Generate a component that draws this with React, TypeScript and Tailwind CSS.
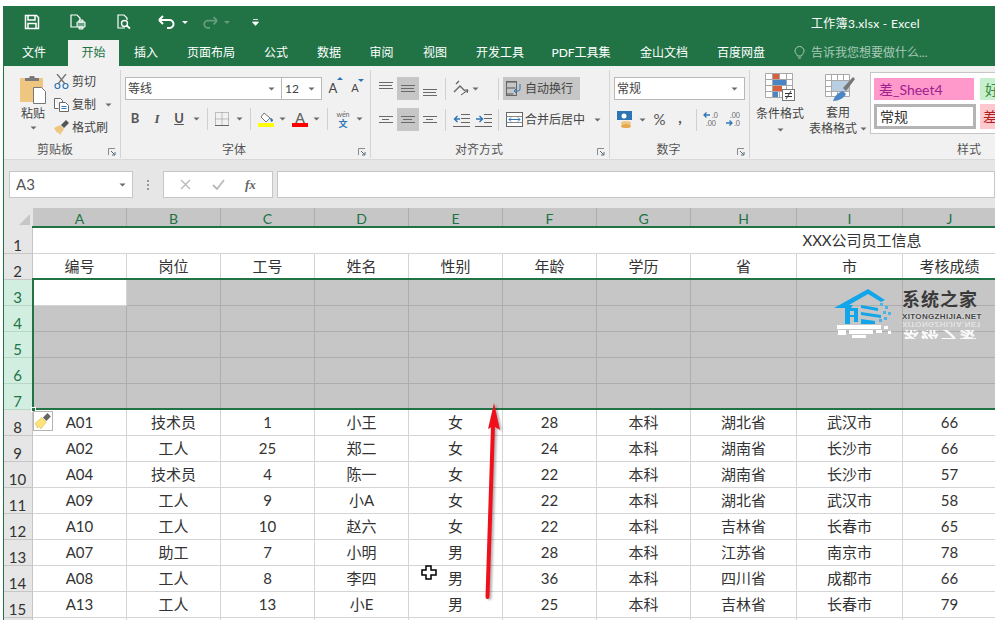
import { ReactNode } from "react";

const columns = [
  { label: "A", w: "w-[94px]", title: "编号" },
  { label: "B", w: "w-[94px]", title: "岗位" },
  { label: "C", w: "w-[94px]", title: "工号" },
  { label: "D", w: "w-[94px]", title: "姓名" },
  { label: "E", w: "w-[94px]", title: "性别" },
  { label: "F", w: "w-[94px]", title: "年龄" },
  { label: "G", w: "w-[94px]", title: "学历" },
  { label: "H", w: "w-[106px]", title: "省" },
  { label: "I", w: "w-[106px]", title: "市" },
  { label: "J", w: "w-[94px]", title: "考核成绩" },
];

const people = [
  ["A01", "技术员", "1", "小王", "女", "28", "本科", "湖北省", "武汉市", "66"],
  ["A02", "工人", "25", "郑二", "女", "24", "本科", "湖南省", "长沙市", "66"],
  ["A04", "技术员", "4", "陈一", "女", "22", "本科", "湖南省", "长沙市", "57"],
  ["A09", "工人", "9", "小A", "女", "22", "本科", "湖北省", "武汉市", "58"],
  ["A10", "工人", "10", "赵六", "女", "22", "本科", "吉林省", "长春市", "65"],
  ["A07", "助工", "7", "小明", "男", "28", "本科", "江苏省", "南京市", "78"],
  ["A08", "工人", "8", "李四", "男", "36", "本科", "四川省", "成都市", "66"],
  ["A13", "工人", "13", "小E", "男", "25", "本科", "吉林省", "长春市", "79"],
];

const tabs = [
  { label: "文件", w: "w-[60px] mr-[4px]" },
  { label: "开始", w: "w-[51px]", active: true },
  { label: "插入", w: "w-[54px]" },
  { label: "页面布局", w: "w-[76px]" },
  { label: "公式", w: "w-[54px]" },
  { label: "数据", w: "w-[52px]" },
  { label: "审阅", w: "w-[53px]" },
  { label: "视图", w: "w-[54px]" },
  { label: "开发工具", w: "w-[76px]" },
  { label: "PDF工具集", w: "w-[86px]" },
  { label: "金山文档", w: "w-[80px]" },
  { label: "百度网盘", w: "w-[74px]" },
];

function Caret({ className = "" }: { className?: string }) {
  return (
    <svg width="7" height="4" viewBox="0 0 7 4" className={`shrink-0 ${className}`}>
      <path d="M0.500 0.500h6L3.500 3.500z" fill="#6a6a6a" />
    </svg>
  );
}

function Launcher() {
  return (
    <svg width="8" height="8" viewBox="0 0 8 8" className="shrink-0">
      <path d="M0.500 7V0.500H7" fill="none" stroke="#8a8a8a" />
      <path d="M3 3l3.500 3.500M7 4v3H4" fill="none" stroke="#5a6a78" />
    </svg>
  );
}

function Sep({ h = "h-[22px]" }: { h?: string }) {
  return <div className={`w-px ${h} bg-[#d0d0d0] shrink-0`} />;
}

function Lines({ rows, active }: { rows: [number, number][]; active?: boolean }) {
  return (
    <div className={`w-[22px] h-[23px] flex items-center justify-center shrink-0 ${active ? "bg-[#c6c6c6]" : ""}`}>
      <svg width="16" height="17" viewBox="0 0 16 17">
        {rows.map(([x, y], i) => (
          <path key={i} d={`M${i % 2 === 0 ? 1 : x} ${y}.5H${i % 2 === 0 ? 15 : 15 - x}`} stroke="#6a6a6a" fill="none" />
        ))}
      </svg>
    </div>
  );
}

function Group({
  w,
  label,
  labelPad,
  children,
}: {
  w: string;
  label: string;
  labelPad: string;
  children: ReactNode;
}) {
  return (
    <div className={`${w} shrink-0 h-[88px] mt-[4px] border-r border-[#d4d4d4] flex flex-col`}>
      <div className="h-[71px] flex flex-col">{children}</div>
      <div className="h-[17px] pt-[1px] flex items-center text-[12px] text-[#555]">
        <span className={`flex-1 text-center ${labelPad}`}>{label}</span>
        <span className="flex mr-[4px] mt-[3px]"><Launcher /></span>
      </div>
    </div>
  );
}

function QuickBar() {
  return (
    <div className="h-[32px] flex items-center pl-[20px] text-white">
      <svg width="16" height="16" viewBox="0 0 16 16">
        <path d="M1.500 1.500h11l2 2v11h-13z" fill="none" stroke="#fff" strokeWidth="1.500" />
        <path d="M4 2v4h7V2M4 14V9.500h8V14" fill="none" stroke="#fff" strokeWidth="1.500" />
      </svg>
      <svg width="18" height="16" viewBox="0 0 18 16" className="ml-[29px]">
        <path d="M8 13H2V1h6l3 3v2" fill="none" stroke="#fff" strokeWidth="1.200" />
        <path d="M8 8h8v5H8z M10 6h4v2h-4z M10 13h4v2h-4z" fill="#fff" fillOpacity="0.35" stroke="#fff" />
      </svg>
      <svg width="16" height="16" viewBox="0 0 16 16" className="ml-[29px]">
        <path d="M9 14H2V1h6l3 3v2" fill="none" stroke="#fff" strokeWidth="1.200" />
        <circle cx="8.500" cy="9.500" r="3" fill="none" stroke="#fff" strokeWidth="1.400" />
        <path d="M10.500 11.500l3.500 3" stroke="#fff" strokeWidth="1.800" />
      </svg>
      <svg width="18" height="14" viewBox="0 0 18 14" className="ml-[26px]">
        <path d="M1 5l4-4M1 5l4 4M1 5h10a4 4 0 0 1 1 8H9" fill="none" stroke="#fff" strokeWidth="2" />
      </svg>
      <svg width="6" height="3" viewBox="0 0 6 3" className="ml-[6px]"><path d="M0 0h6L3 3z" fill="#fff" /></svg>
      <svg width="16" height="13" viewBox="0 0 18 14" className="ml-[14px] opacity-30">
        <path d="M17 5l-4-4M17 5l-4 4M17 5H7a4 4 0 0 0-1 8h3" fill="none" stroke="#fff" strokeWidth="2" />
      </svg>
      <svg width="6" height="3" viewBox="0 0 6 3" className="ml-[6px] opacity-30"><path d="M0 0h6L3 3z" fill="#fff" /></svg>
      <svg width="7" height="7" viewBox="0 0 7 7" className="ml-[22px]"><path d="M1 0.500h5M0.500 3h6L3.500 6.500z" stroke="#fff" strokeWidth="0.800" fill="#fff" /></svg>
      <span className="ml-[552px] mt-[3px] text-[12px] tracking-[0.3px] whitespace-nowrap">工作簿3.xlsx - Excel</span>
    </div>
  );
}

function TabsRow() {
  return (
    <div className="h-[28px] flex items-end text-[12px] text-white whitespace-nowrap">
      {tabs.map((t) => (
        <div
          key={t.label}
          className={`${t.w} h-[26px] flex items-center justify-center shrink-0 ${t.active ? "bg-[#f1f1f1] text-[#217346]" : ""}`}
        >
          {t.label}
        </div>
      ))}
      <div className="ml-[16px] h-[26px] flex items-center text-[#a9c9b7]">
        <svg width="11" height="14" viewBox="0 0 11 14" className="mr-[6px]">
          <path d="M3.500 10C3 8 1 7.500 1 5a4.500 4.500 0 0 1 9 0c0 2.500-2 3-2.500 5zM4 12h3" fill="none" stroke="#a9c9b7" />
        </svg>
        告诉我您想要做什么...
      </div>
    </div>
  );
}

function ClipboardGroup() {
  return (
    <Group w="w-[117px]" label="剪贴板" labelPad="pr-[2px]">
      <div className="flex h-full text-[12px] text-[#444]">
        <div className="w-[50px] flex flex-col items-center pt-[5px] pl-[8px]">
          <svg width="29" height="30" viewBox="0 0 29 30">
            <rect x="1" y="3" width="23" height="24" rx="1" fill="#eec67f" />
            <path d="M6 3h4l1-2h4l1 2h4v3H6z" fill="#7a7a7a" />
            <path d="M14.500 12.500h8l4 4v12h-12z" fill="#fff" stroke="#777" />
          </svg>
          <span className="mt-[1px] leading-[16px]">粘贴</span>
          <Caret className="mt-[4px]" />
        </div>
        <div className="flex flex-col pt-[1px] gap-[2px]">
          <div className="h-[21px] flex items-center">
            <svg width="15" height="15" viewBox="0 0 15 15" className="mr-[3px]">
              <path d="M3 0l8 10M12 0L4 10" stroke="#777" strokeWidth="1.400" />
              <circle cx="3.500" cy="12" r="2.500" fill="none" stroke="#2e75b6" strokeWidth="1.200" />
              <circle cx="11.500" cy="12" r="2.500" fill="none" stroke="#2e75b6" strokeWidth="1.200" />
            </svg>
            剪切
          </div>
          <div className="h-[21px] flex items-center">
            <svg width="15" height="14" viewBox="0 0 15 14" className="mr-[3px]">
              <path d="M0.500 0.500h6l2 2v2M0.500 0.500v10h4" fill="#fff" stroke="#6a6a6a" />
              <path d="M5.500 4.500h6l3 3v6h-9z" fill="#fff" stroke="#6a6a6a" />
              <path d="M7.500 8.500h5M7.500 10.500h5" stroke="#2e75b6" />
            </svg>
            复制
            <Caret className="ml-[9px]" />
          </div>
          <div className="h-[21px] flex items-center">
            <svg width="15" height="15" viewBox="0 0 15 15" className="mr-[3px]">
              <path d="M0 8l6-3 4 4-4 6-2-3-1 1z" fill="#eec67f" />
              <path d="M7 5l5-5 3 3-5 5z" fill="#555" />
            </svg>
            格式刷
          </div>
        </div>
      </div>
    </Group>
  );
}

function FontGroup() {
  return (
    <Group w="w-[250px]" label="字体" labelPad="pr-[11px]">
      <div className="flex items-center h-[23px] mt-[7px] ml-[4px] text-[12px] text-[#444]">
        <div className="w-[157px] h-[23px] bg-white border border-[#b8b8b8] flex items-center justify-between pl-[2px] pr-[6px]">
          等线
          <Caret />
        </div>
        <div className="w-[40px] h-[23px] bg-white border border-l-0 border-[#b8b8b8] flex items-center justify-between pl-[3px] pr-[6px]">
          12
          <Caret />
        </div>
        <div className="ml-[4px] relative text-[13px] w-[14px] text-center">
          A<span className="absolute -top-[2px] -right-[3px] w-0 h-0 border-x-[3px] border-b-[3px] border-x-transparent border-b-[#2e75b6]" />
        </div>
        <div className="ml-[9px] relative text-[11px] w-[12px] text-center">
          A<span className="absolute -top-[1px] -right-[3px] w-0 h-0 border-x-[3px] border-t-[3px] border-x-transparent border-t-[#2e75b6]" />
        </div>
      </div>
      <div className="flex items-center h-[24px] mt-[7px] ml-[4px] text-[13px] text-[#555]">
        <span className="w-[20px] text-center font-bold">B</span>
        <span className="w-[24px] text-center italic font-semibold font-['Liberation_Serif',serif]">I</span>
        <span className="w-[20px] text-center font-bold underline">U</span>
        <Caret className="ml-[4px]" />
        <span className="ml-[7px] mr-[7px]"><Sep /></span>
        <svg width="14" height="14" viewBox="0 0 14 14">
          <path d="M0.500 0.500h13v13h-13zM7 0.500v13M0.500 7h13" fill="none" stroke="#888" strokeDasharray="1 1" />
          <path d="M0 13.500h14" stroke="#666" />
        </svg>
        <Caret className="ml-[7px]" />
        <span className="ml-[7px] mr-[7px]"><Sep /></span>
        <div className="flex flex-col items-center w-[16px]">
          <svg width="16" height="11" viewBox="0 0 16 11">
            <path d="M6 1l6 5-4 4-5-5z" fill="#fff" stroke="#777" />
            <path d="M12 6c2 0 3 1 3 3l-2 1z" fill="#2e75b6" />
          </svg>
          <div className="w-[16px] h-[4px] bg-[#ffff00]" />
        </div>
        <Caret className="ml-[5px]" />
        <div className="flex flex-col items-center w-[16px] ml-[6px] leading-[11px]">
          <span className="font-semibold text-[#666] text-[14px]">A</span>
          <div className="w-[16px] h-[4px] bg-[#ff0000]" />
        </div>
        <Caret className="ml-[5px]" />
        <span className="ml-[7px] mr-[7px]"><Sep /></span>
        <div className="flex flex-col items-center w-[16px]">
          <span className="text-[7px] leading-[10px] text-[#666]">wén</span>
          <span className="text-[9px] leading-[10px] text-[#2e75b6] font-bold">文</span>
        </div>
        <Caret className="ml-[5px]" />
      </div>
    </Group>
  );
}

function AlignGroup() {
  return (
    <Group w="w-[239px]" label="对齐方式" labelPad="pr-[10px]">
      <div className="flex items-center h-[23px] mt-[7px] ml-[4px] text-[12px] text-[#444]">
        <Lines rows={[[1, 2], [1, 5], [1, 8]]} />
        <Lines active rows={[[1, 5], [1, 8], [1, 11]]} />
        <Lines rows={[[1, 9], [1, 12], [1, 15]]} />
        <span className="mx-[4px]"><Sep /></span>
        <svg width="17" height="17" viewBox="0 0 17 17" className="ml-[3px]">
          <path d="M1 12l6-6 5 5M3 4l3-3" fill="none" stroke="#666" strokeWidth="1.400" />
          <path d="M8 15l7-5M15 10l-3 0M15 10l-1 3" fill="none" stroke="#555" />
        </svg>
        <Caret className="ml-[2px]" />
        <span className="ml-[19px]"><Sep /></span>
        <div className="ml-[4px] w-[77px] h-[23px] bg-[#c6c6c6] flex items-center pl-[3px]">
          <svg width="16" height="15" viewBox="0 0 16 15" className="mr-[3px]">
            <path d="M0.500 1h10M0.500 7h9M0.500 13h7" stroke="#555" />
            <rect x="0.500" y="0.500" width="10" height="14" fill="none" stroke="#666" />
            <path d="M14 3v5a2 2 0 0 1-2 2H8M10 8l-2 2 2 2" fill="none" stroke="#2e75b6" />
          </svg>
          自动换行
        </div>
      </div>
      <div className="flex items-center h-[23px] mt-[8px] ml-[4px] text-[12px] text-[#444]">
        <Lines rows={[[1, 5], [4, 8], [1, 11]]} />
        <Lines active rows={[[1, 5], [3, 8], [1, 11]]} />
        <Lines rows={[[1, 5], [4, 8], [1, 11]]} />
        <span className="mx-[4px]"><Sep /></span>
        <svg width="17" height="14" viewBox="0 0 17 14" className="ml-[3px]">
          <path d="M8 1.500h9M8 5.500h9M8 9.500h9M0 13.500h17M0 1.500h0" stroke="#666" />
          <path d="M7 6H2M4.500 3L1.500 6l3 3" fill="none" stroke="#2e75b6" strokeWidth="1.400" />
        </svg>
        <svg width="17" height="14" viewBox="0 0 17 14" className="ml-[5px]">
          <path d="M9 1.500h8M9 5.500h8M9 9.500h8M0 13.500h17" stroke="#666" />
          <path d="M1 6h6M4.500 3l3 3-3 3" fill="none" stroke="#2e75b6" strokeWidth="1.400" />
        </svg>
        <span className="ml-[6px]"><Sep /></span>
        <svg width="17" height="15" viewBox="0 0 17 15" className="ml-[7px] mr-[2px]">
          <rect x="0.500" y="0.500" width="16" height="14" fill="#fff" stroke="#666" />
          <path d="M0.500 4.500h16M0.500 10.500h16" stroke="#888" />
          <path d="M3 7.500h11M3 7.500l2-2M3 7.500l2 2M14 7.500l-2-2M14 7.500l-2 2" fill="none" stroke="#2e75b6" />
        </svg>
        合并后居中
        <Caret className="ml-[9px]" />
      </div>
    </Group>
  );
}

function NumberGroup() {
  return (
    <Group w="w-[140px]" label="数字" labelPad="pr-[10px]">
      <div className="w-[131px] h-[23px] mt-[7px] ml-[4px] bg-white border border-[#b8b8b8] flex items-center justify-between pl-[2px] pr-[6px] text-[12px] text-[#444]">
        常规
        <Caret />
      </div>
      <div className="flex items-center h-[23px] mt-[8px] ml-[7px] text-[#555]">
        <svg width="17" height="17" viewBox="0 0 17 17">
          <rect x="0" y="0" width="15" height="9" fill="#2e75b6" />
          <circle cx="7" cy="5" r="2.500" fill="#fff" />
          <ellipse cx="9" cy="12" rx="5" ry="2" fill="#eec67f" />
          <ellipse cx="9" cy="15" rx="5" ry="2" fill="#e6a94e" />
        </svg>
        <Caret className="ml-[5px]" />
        <span className="ml-[5px] w-[17px] text-center text-[15px]">%</span>
        <span className="ml-[5px] w-[14px] text-center text-[15px] font-bold leading-none -mt-[4px]">,</span>
        <span className="ml-[9px]"><Sep /></span>
        <svg width="18" height="17" viewBox="0 0 18 17" className="ml-[6px]">
          <path d="M7 4H1M3.500 1.500L1 4l2.500 2.500" fill="none" stroke="#2e75b6" strokeWidth="1.300" />
          <text x="9" y="7" fontSize="7" fill="#666">.0</text>
          <text x="3" y="15" fontSize="7" fill="#666">.00</text>
        </svg>
        <svg width="18" height="17" viewBox="0 0 18 17" className="ml-[4px]">
          <path d="M1 12h6M4.500 9.500L7 12l-2.500 2.500" fill="none" stroke="#2e75b6" strokeWidth="1.300" />
          <text x="5" y="7" fontSize="7" fill="#666">.00</text>
          <text x="9" y="15" fontSize="7" fill="#666">.0</text>
        </svg>
      </div>
    </Group>
  );
}

function StylesGroup() {
  return (
    <div className="shrink-0 w-[260px] h-[88px] mt-[4px] flex flex-col text-[12px] text-[#444]">
      <div className="h-[71px] flex">
        <div className="w-[54px] ml-[3px] flex flex-col items-center pt-[3px] leading-[15px]">
          <svg width="30" height="28" viewBox="0 0 30 28">
            <path d="M0.500 0.500h27v24h-27zM0.500 6.500h27M0.500 12.500h27M0.500 18.500h27M7.500 0.500v24M14.500 0.500v24M21.500 0.500v24" fill="#fff" stroke="#a8a8a8" />
            <rect x="8" y="1" width="6" height="5" fill="#d9603b" />
            <rect x="8" y="7" width="13" height="5" fill="#4a86c5" />
            <rect x="8" y="13" width="9" height="5" fill="#d9603b" />
            <rect x="8" y="19" width="5" height="5" fill="#4a86c5" />
            <rect x="17.500" y="16.500" width="12" height="11" fill="#fff" stroke="#777" />
            <path d="M20 20.500h7M20 23.500h7M26 18l-5 8" stroke="#333" fill="none" />
          </svg>
          <span className="mt-[5px] whitespace-nowrap">条件格式</span>
          <Caret className="mt-[7px]" />
        </div>
        <div className="w-[62px] flex flex-col items-center pt-[4px] leading-[15px]">
          <svg width="31" height="28" viewBox="0 0 31 28" className="ml-[4px]">
            <path d="M0.500 0.500h24v22h-24zM0.500 6.500h24M0.500 12.500h24M0.500 17.500h24M6.500 0.500v22M12.500 0.500v22M18.500 0.500v22" fill="#fff" stroke="#a8a8a8" />
            <rect x="7" y="7" width="17" height="10" fill="#b9cde3" />
            <path d="M18 14l10-11 2 2-9 12z" fill="#777" />
            <path d="M8 27c2-6 6-9 10-10l3 3c-2 4-7 7-13 7z" fill="#4a86c5" />
          </svg>
          <span className="mt-[3px]">套用</span>
          <div className="flex items-center whitespace-nowrap mt-[1px]">
            表格格式<Caret className="ml-[3px]" />
          </div>
        </div>
        <div className="ml-[1px] mt-[2px] w-[140px] h-[62px] bg-white border border-[#c6c6c6] flex flex-col gap-[4px] p-[3px] pt-[5px] text-[14px]">
          <div className="flex gap-[6px]">
            <div className="w-[100px] h-[22px] bg-[#ff99cc] text-[#a0208c] flex items-center pl-[5px] shrink-0">差_Sheet4</div>
            <div className="flex-1 h-[22px] bg-[#c6efce] text-[#3a8a3a] flex items-center pl-[5px]">好</div>
          </div>
          <div className="flex gap-[4px]">
            <div className="w-[102px] h-[25px] bg-white border-[3px] border-[#b4b4b4] text-[#333] flex items-center pl-[3px] shrink-0">常规</div>
            <div className="flex-1 h-[25px] bg-[#ffc7ce] text-[#b02020] flex items-center pl-[3px]">差</div>
          </div>
        </div>
      </div>
      <div className="h-[17px] pt-[1px] flex items-center pl-[207px] text-[#555]">样式</div>
    </div>
  );
}

function FormulaBand() {
  return (
    <div className="h-[48px] bg-[#e6e6e6] flex items-start pt-[11px] pl-[5px] text-[#555]">
      <div className="w-[124px] h-[27px] bg-white border border-[#c6c6c6] flex items-center justify-between px-[6px] text-[15px]">
        A3
        <Caret />
      </div>
      <div className="w-[30px] h-[27px] flex flex-col items-center justify-center gap-[2px]">
        <span className="w-[2px] h-[2px] bg-[#999]" />
        <span className="w-[2px] h-[2px] bg-[#999]" />
        <span className="w-[2px] h-[2px] bg-[#999]" />
      </div>
      <div className="w-[110px] h-[27px] bg-white border border-[#c6c6c6] flex items-center justify-around px-[6px]">
        <svg width="11" height="11" viewBox="0 0 11 11"><path d="M1 1l9 9M10 1l-9 9" stroke="#b8b8b8" strokeWidth="1.300" /></svg>
        <svg width="13" height="11" viewBox="0 0 13 11"><path d="M1 6l4 4 7-9" fill="none" stroke="#b8b8b8" strokeWidth="1.800" /></svg>
        <span className="text-[13px] italic font-bold font-['Liberation_Serif',serif] text-[#666]">fx</span>
      </div>
      <div className="ml-[4px] flex-1 h-[27px] bg-white border border-[#c6c6c6]" />
    </div>
  );
}

function RowHead({ n, selected }: { n?: number; selected?: boolean }) {
  return (
    <div
      className={`w-[29px] h-[26px] shrink-0 flex items-end justify-center pr-[1px] leading-[15px] text-[15px] border-r border-b ${
        selected ? "bg-[#d2eee0] text-[#217346] border-[#b6d8c6]" : "bg-[#e6e6e6] text-[#333] border-[#c6c6c6]"
      }`}
    >
      {n}
    </div>
  );
}

function Cell({ w, selected, children }: { w: string; selected?: boolean; children?: ReactNode }) {
  return (
    <div
      className={`${w} h-[26px] shrink-0 flex items-center justify-center border-r border-b ${
        selected ? "bg-[#c6c6c6] border-[#adadad]" : "border-[#d4d4d4]"
      }`}
    >
      {children}
    </div>
  );
}

function Sheet() {
  return (
    <div className="relative text-[15px] text-[#333]">
      <div className="flex h-[20px]">
        <div className="w-[29px] shrink-0 bg-[#e6e6e6] flex justify-end items-end pr-[3px] pb-[3px]">
          <div className="w-0 h-0 border-l-[11px] border-b-[11px] border-l-transparent border-b-[#c6c6c6]" />
        </div>
        {columns.map((c) => (
          <div key={c.label} className={`${c.w} shrink-0 bg-[#c6c6c6] border-r border-[#adadad] text-center text-[14px] text-[#217346] leading-[22px] overflow-hidden`}>
            {c.label}
          </div>
        ))}
      </div>
      <div className="flex">
        <RowHead n={1} />
        <div className="w-[1658px] h-[26px] shrink-0 flex items-center justify-center border-b border-[#d4d4d4]">XXX公司员工信息</div>
      </div>
      <div className="flex">
        <RowHead n={2} />
        {columns.map((c) => (
          <Cell key={c.label} w={c.w}>{c.title}</Cell>
        ))}
      </div>
      {[3, 4, 5, 6, 7].map((n) => (
        <div key={n} className="flex">
          <RowHead n={n} selected />
          {columns.map((c, i) => (
            <Cell key={c.label} w={c.w} selected={n !== 3 || i !== 0} />
          ))}
        </div>
      ))}
      {people.map((p, r) => (
        <div key={p[0]} className="flex">
          <RowHead n={r + 8} />
          {columns.map((c, i) => (
            <Cell key={c.label} w={c.w}>{p[i]}</Cell>
          ))}
        </div>
      ))}
      <div className="flex">
        <RowHead />
        {columns.map((c) => (
          <Cell key={c.label} w={c.w} />
        ))}
      </div>

      {/* selection outlines */}
      <div className="absolute left-[28px] right-0 top-[18px] h-[2px] bg-[#217346]" />
      <div className="absolute left-[28px] right-0 top-[70px] h-[132px] border-2 border-r-0 border-[#217346]" />
      <div className="absolute left-[27px] top-[199px] w-[5px] h-[5px] bg-[#217346] border border-white" />

      {/* paste options */}
      <div className="absolute left-[29px] top-[203px] w-[20px] h-[20px] bg-white border border-[#b4b4b4] flex items-center justify-center">
        <svg width="18" height="17" viewBox="0 0 16 15">
          <path d="M1 9l6-5 4 4-5 6-1-2-2 1z" fill="#ffe27a" stroke="#d8b848" strokeWidth="0.500" />
          <path d="M8 4l4-4 3 3-4 4z" fill="#666" />
        </svg>
      </div>
    </div>
  );
}

function Watermark() {
  return (
    <div className="absolute left-[834px] top-[287px] w-[150px] h-[54px]">
      <svg width="64" height="54" viewBox="0 0 64 54" className="absolute left-0 top-0">
        <path d="M0 21L34 2l17 11-4 2-13-8-19 11h4l-2 3z" fill="#12a5ea" />
        <path d="M11 21h5v16h-5zM16 21h8v3h-8zM20 21h4v14h-4zM16 28h8v2h-8z" fill="#12a5ea" />
        <path d="M27 18l17 3v3l-17-3zM27 25l20 3v3l-20-3zM27 32l14 2v3H27z" fill="#12a5ea" />
        <path d="M46 16h3v3h-3zM51 19h3v3h-3zM49 24h3v3h-3zM54 25h3v3h-3zM50 30h3v3h-3zM45 32h3v3h-3z" fill="#4bb4e6" />
        <path d="M3 38h44v4H3zM4 43h8v5H4zM15 43h24v4H15zM18 48h14v3H18zM42 43h6v3h-6zM50 39h4v3h-4zM54 44h3v3h-3z" fill="#fff" />
      </svg>
      <div className="absolute left-[68px] top-[1px] text-[18px] leading-[22px] font-bold text-[#3a3a3a] whitespace-nowrap tracking-[1px]">系统之家</div>
      <div className="absolute left-[68px] top-[25px] text-[8px] leading-[10px] font-bold text-[#444] whitespace-nowrap tracking-[0.35px] font-['Liberation_Sans',sans-serif] [text-shadow:0_0_2px_#fff]">XITONGZHIJIA.NET</div>
      <div className="absolute left-[68px] top-[35px] w-[78px] h-[5px] overflow-hidden opacity-50">
        <div className="text-[8px] leading-[5px] font-bold text-white whitespace-nowrap -scale-y-100 tracking-[0.35px] font-['Liberation_Sans',sans-serif]">XITONGZHIJIA.NET</div>
      </div>
      <div className="absolute left-[68px] top-[43px] w-[78px] h-[9px] overflow-hidden opacity-90">
        <div className="text-[18px] leading-[9px] font-bold text-white whitespace-nowrap -scale-y-100 tracking-[1px]">系统之家</div>
      </div>
    </div>
  );
}

function Overlays() {
  return (
    <>
      <Watermark />
      <svg width="30" height="210" viewBox="0 0 30 210" className="absolute left-[478px] top-[398px] drop-shadow-[2px_1px_1px_rgba(0,0,0,0.3)]">
        <path d="M9.500 199L15 28" stroke="#f0101c" strokeWidth="4" strokeLinecap="round" fill="none" />
        <path d="M16 5L10 31 15.500 28 22 32z" fill="#f0101c" />
      </svg>
      <svg width="16" height="16" viewBox="0 0 16 16" className="absolute left-[421px] top-[565px]">
        <path d="M5 1h5v4h5v5h-5v4H5v-4H1V5h4z" fill="#fff" stroke="#000" strokeWidth="1.500" />
      </svg>
    </>
  );
}

export default function App() {
  return (
    <div className="relative w-[995px] h-[620px] overflow-hidden bg-white pt-[6px] pl-[3px] font-['Lato','Noto_Sans_CJK_SC',sans-serif]">
      <div className="w-[992px] h-[614px] border-l border-[#217346] overflow-hidden">
        <div className="h-[60px] bg-[#217346]">
          <QuickBar />
          <TabsRow />
        </div>
        <div className="h-[94px] bg-[#f1f1f1] border-b border-[#d8d8d8] flex">
          <ClipboardGroup />
          <FontGroup />
          <AlignGroup />
          <NumberGroup />
          <StylesGroup />
        </div>
        <FormulaBand />
        <Sheet />
      </div>
      <Overlays />
    </div>
  );
}
